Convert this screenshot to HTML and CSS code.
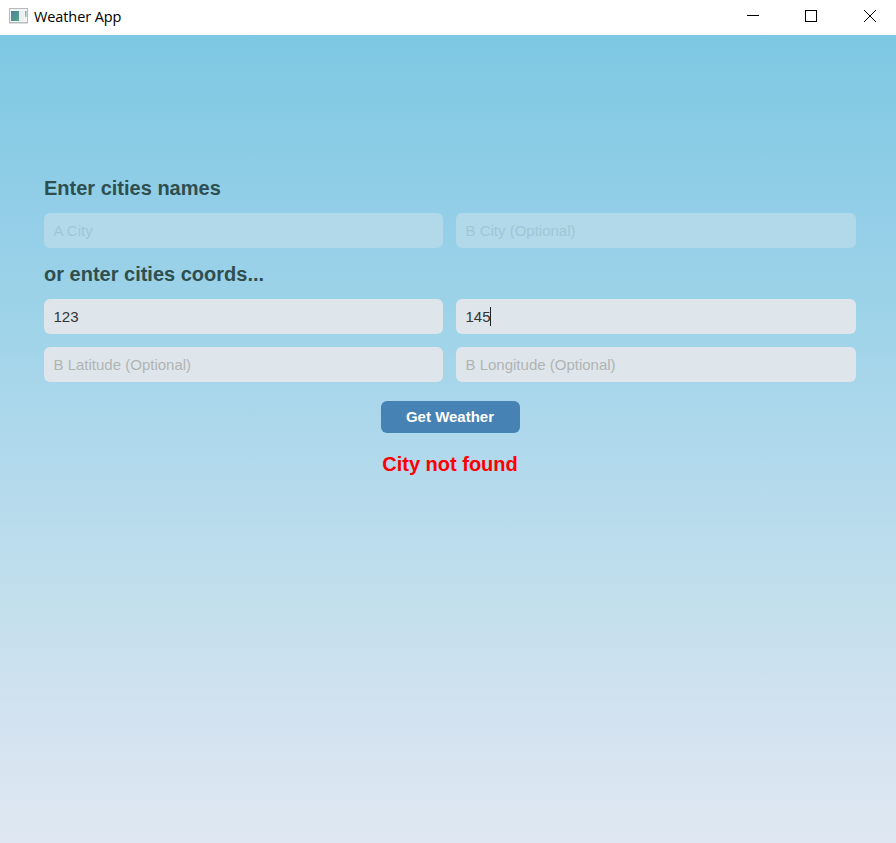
FILE: index.html
```html
<!DOCTYPE html>
<html lang="en">
<head>
<meta charset="utf-8">
<title>Weather App</title>
<link rel="stylesheet" href="styles.css">
</head>
<body>
<header class="titlebar">
  <svg class="app-icon" width="20" height="16" viewBox="0 0 20 16">
    <defs>
      <linearGradient id="pane" x1="0" y1="0" x2="1" y2="1"><stop offset="0" stop-color="#4c7fa0"/><stop offset="1" stop-color="#56a584"/></linearGradient>
      <linearGradient id="side" x1="0" y1="0" x2="0" y2="1"><stop offset="0" stop-color="#75aab0"/><stop offset="1" stop-color="#8cc9a8"/></linearGradient>
    </defs>
    <rect x=".5" y=".5" width="18" height="14" fill="#f4f5f5" stroke="#b3b9be"/>
    <path d="M0 15h19" stroke="#b9bdc1"/>
    <rect x="2" y="3" width="8" height="10" fill="url(#pane)"/>
    <rect x="10" y="3" width="5" height="10" fill="#eceeef"/>
    <rect x="16" y="3" width="1.500" height="6" fill="url(#side)"/>
  </svg>
  <span class="title">Weather App</span>
  <svg class="controls" width="130" height="16" viewBox="0 0 130 16" fill="none" stroke="#000">
    <path d="M0 7.5h12" shape-rendering="crispEdges"/>
    <rect x="58.500" y="2.500" width="11" height="11" shape-rendering="crispEdges"/>
    <path d="M117 2l12 12M129 2l-12 12"/>
  </svg>
</header>
<main class="content">
  <h2 class="heading">Enter cities names</h2>
  <div class="row names">
    <div class="field disabled">A City</div>
    <div class="field disabled">B City (Optional)</div>
  </div>
  <h2 class="heading">or enter cities coords...</h2>
  <div class="row coords">
    <div class="field filled">123</div>
    <div class="field filled focused">145<span class="caret"></span></div>
    <div class="field">B Latitude (Optional)</div>
    <div class="field">B Longitude (Optional)</div>
  </div>
  <button class="submit">Get Weather</button>
  <p class="error">City not found</p>
</main>
</body>
</html>
```
FILE: styles.css
```css
* { box-sizing: border-box; }
body {
  margin: 0;
  height: 843px;
  display: flex;
  flex-direction: column;
  overflow: hidden;
  font-family: "Liberation Sans", Arial, sans-serif;
}
.titlebar {
  height: 35px;
  flex: none;
  display: flex;
  align-items: flex-start;
  padding: 8px 19px 0 9px;
  background: #fff;
}
.title {
  margin-left: 5px;
  font: 14.5px/18px "Open Sans", "Noto Sans", sans-serif;
  letter-spacing: -0.1px;
  color: #000;
}
.controls { margin-left: auto; }
.content {
  flex: 1;
  display: flex;
  flex-direction: column;
  padding: 140px 40px 0 44px;
  background: linear-gradient(#7ec8e3, #87cbe4 10%, #93cee8 22%, #9dd3e8 34%, #afd8ec 50%, #c2dfec 70%, #d2e2f0 84%, #dfe8f2);
}
.heading {
  margin: 0;
  height: 38px;
  font-size: 20px;
  line-height: 26px;
  color: #2f4f4f;
}
.row {
  display: grid;
  grid-template-columns: 399px 400px;
  gap: 13px;
}
.names { margin-bottom: 13px; }
.field {
  display: flex;
  align-items: center;
  height: 35px;
  padding: 0 9.5px;
  border-radius: 6px;
  background: #dee6eb;
  color: #b0b4b4;
  font-size: 15px;
}
.disabled { background: #b1d9e9; color: #a0c6d6; }
.filled { color: #333; }
.caret { width: 1px; height: 19px; margin-left: -1px; background: #222; }
.submit {
  align-self: center;
  width: 139px;
  height: 32px;
  margin: 19px 0 0 0;
  padding: 0 0 2px;
  border: 0;
  border-radius: 6px;
  background: #4682b4;
  color: #fff;
  font: bold 15px "Liberation Sans", Arial, sans-serif;
}
.error {
  align-self: center;
  margin: 18px 0 0;
  font-size: 20px;
  font-weight: bold;
  line-height: 26px;
  color: #f00;
}
```
